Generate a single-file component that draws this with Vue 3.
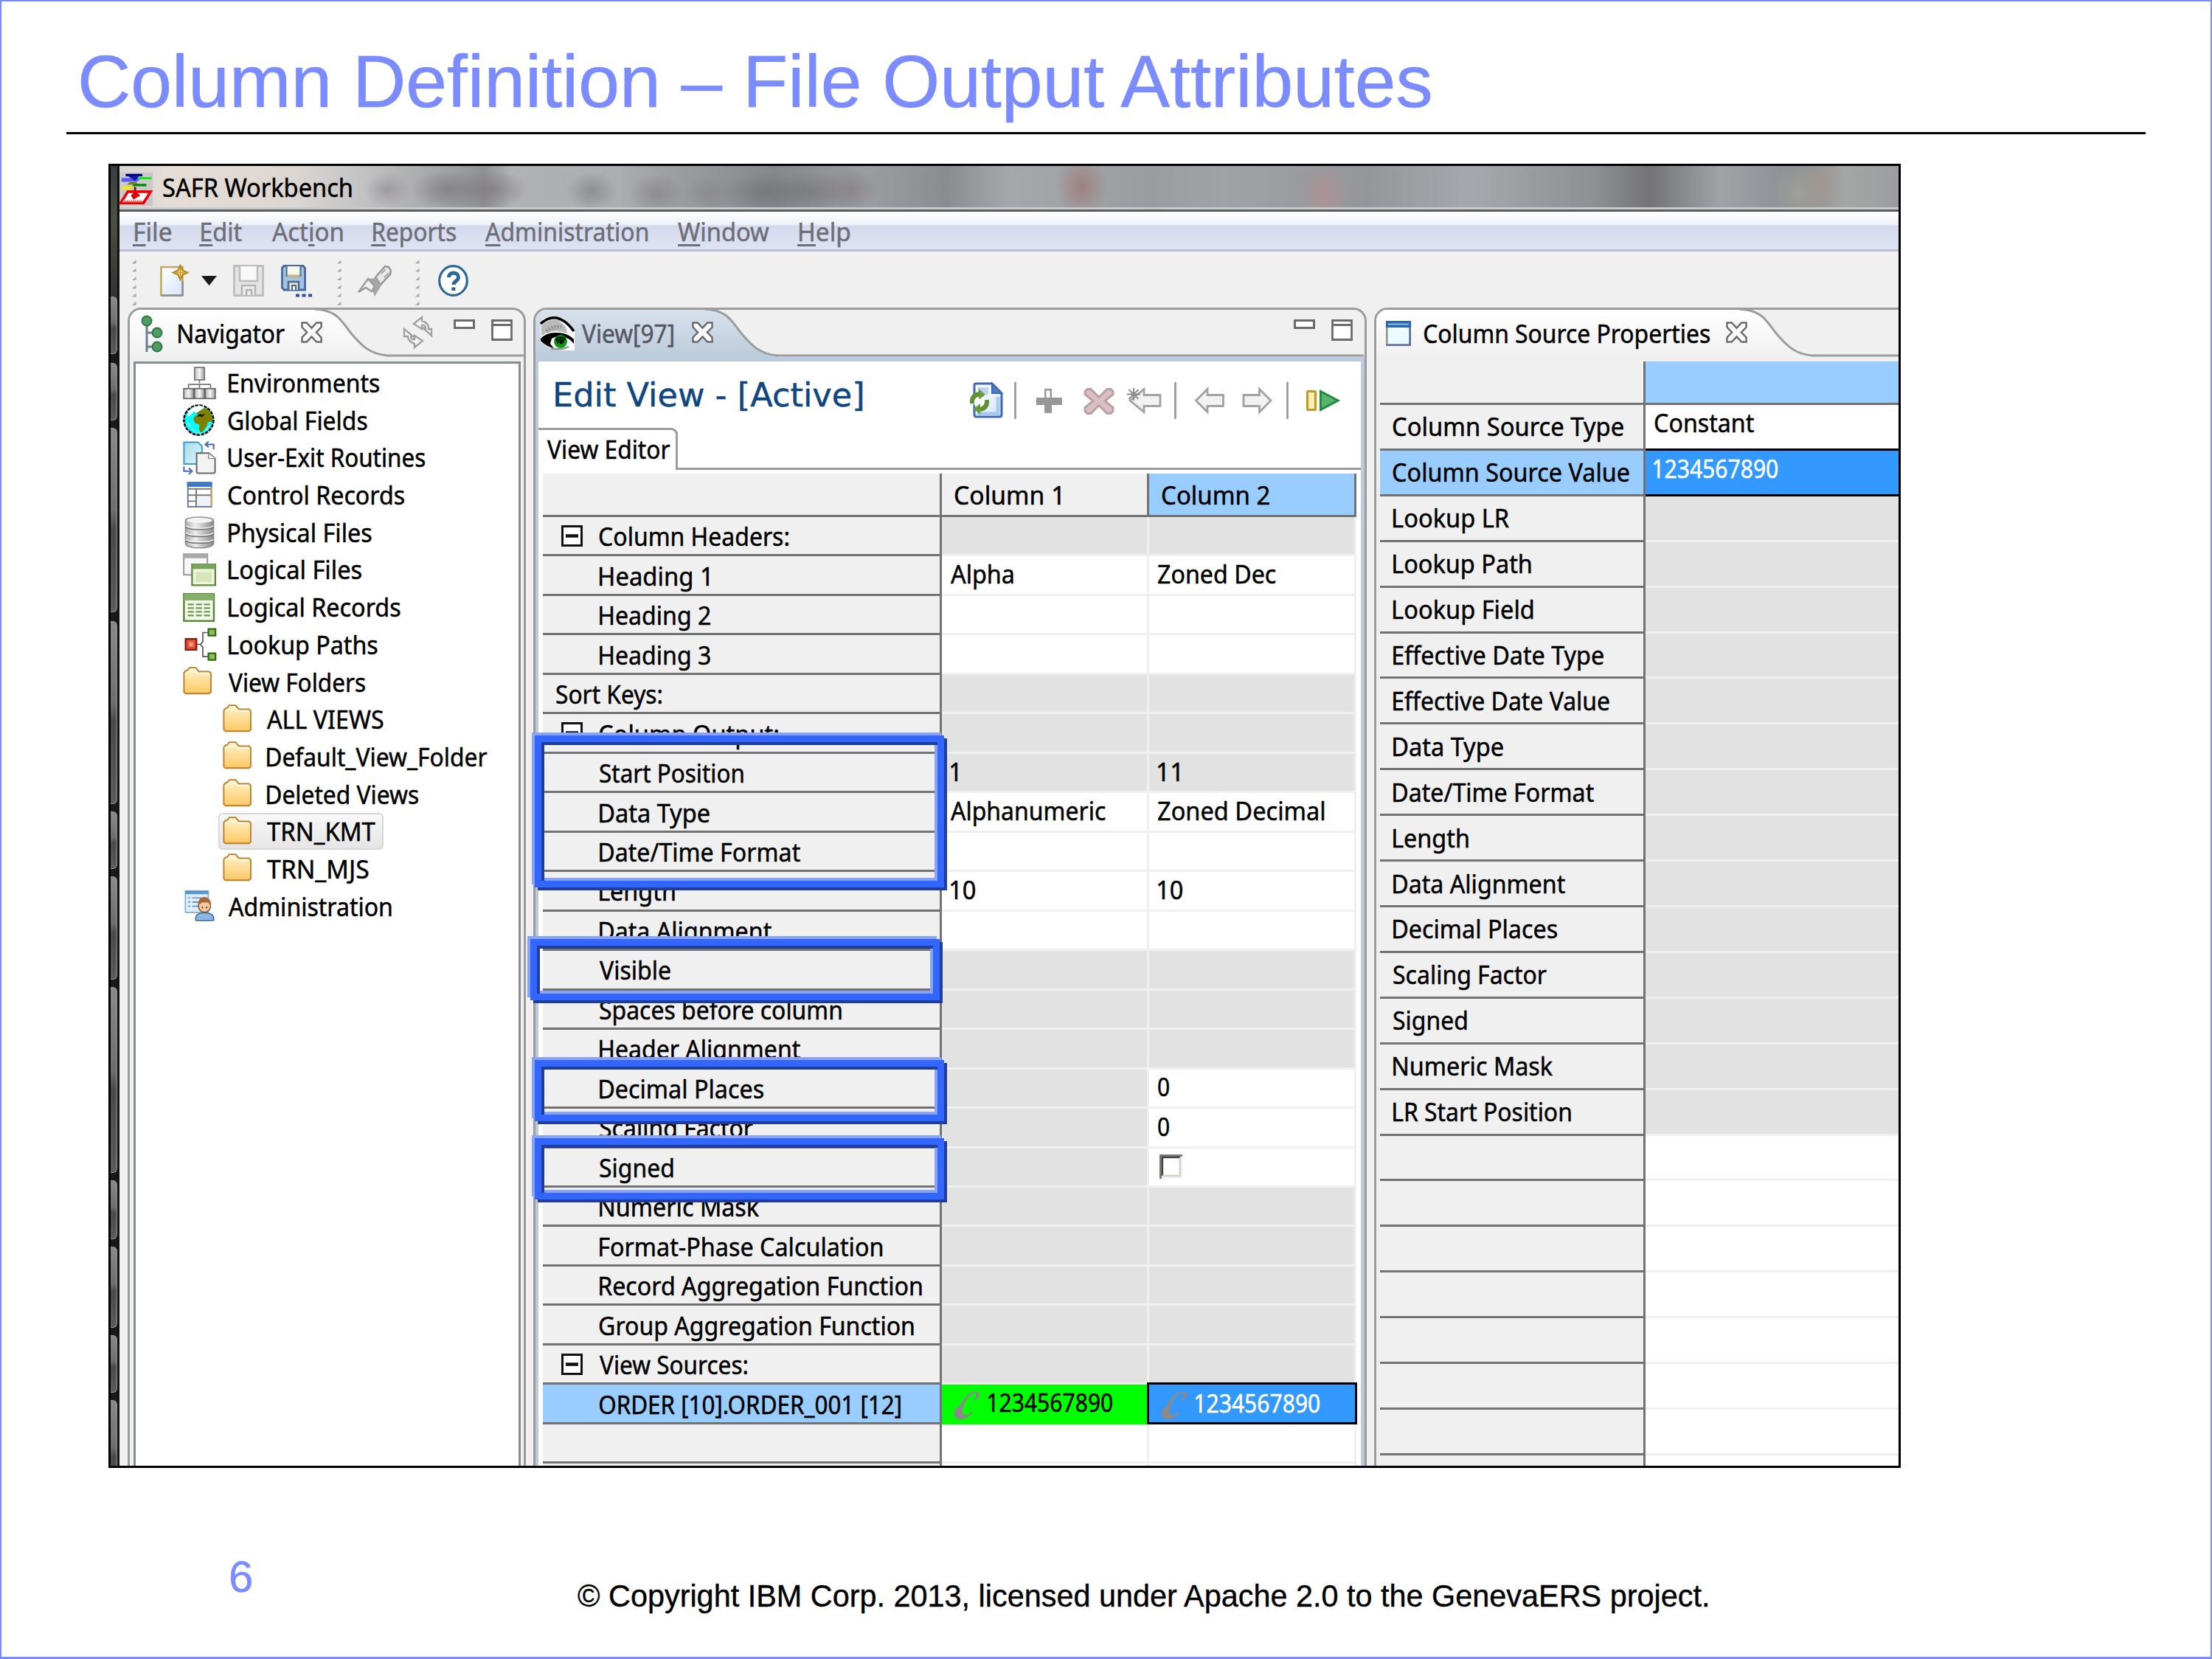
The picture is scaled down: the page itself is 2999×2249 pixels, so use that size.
<script setup>
// Stretches a label horizontally so that its inked width equals the given number of pixels.
const pen = document.createElement('canvas').getContext('2d')
function fit(el, { value }) {
  const cs = getComputedStyle(el)
  pen.font = `${cs.fontWeight} ${cs.fontSize} ${cs.fontFamily}`
  const m = pen.measureText(el.textContent)
  const ink = m.actualBoundingBoxRight + m.actualBoundingBoxLeft
  const s = value / ink
  el.style.width = value + 'px'
  el.style.transform = `translateX(${m.actualBoundingBoxLeft * s}px) scaleX(${s})`
}
const vFit = { mounted: fit }

const strip = [
  [177, 78], [12, 78], [10, 250], [12, 248], [10, 78], [10, 140],
  [10, 252], [10, 80], [10, 110], [10, 78], [10, 140],
]

const menu = [
  ['', 'F', 'ile', 49.5, 183], ['', 'E', 'dit', 55, 273], ['Act', 'i', 'on', 96, 368.5],
  ['', 'R', 'eports', 112, 506], ['', 'A', 'dministration', 220.5, 657.5],
  ['', 'W', 'indow', 124, 919], ['', 'H', 'elp', 69, 1083.5],
].map((m, i, all) => ({
  pre: m[0], key: m[1], post: m[2], w: m[3],
  gap: m[4] - (i ? all[i - 1][4] + all[i - 1][3] : 162),
}))

const icons = {
  env: '<path d="M8 5v3M2.7 11V8.6h10.6V11M8 8.6V11" fill="none" stroke="#777" stroke-width=".6"/><rect x="5.6" y=".4" width="4.8" height="6" fill="url(#steel)" stroke="#777" stroke-width=".6"/><rect x=".4" y="10.6" width="4.8" height="4.8" fill="url(#steel)" stroke="#666" stroke-width=".6"/><rect x="5.6" y="10.6" width="4.8" height="4.8" fill="url(#steel)" stroke="#666" stroke-width=".6"/><rect x="10.8" y="10.6" width="4.8" height="4.8" fill="url(#steel)" stroke="#666" stroke-width=".6"/>',
  globe: '<circle cx="7.6" cy="8" r="7.1" fill="#0ff" stroke="#000" stroke-width=".9" stroke-dasharray="1.6 .5"/><path d="M4.5 1.8 8 1l2.5.6-2 1.8-2 1.2L4.5 3z" fill="#fff"/><path d="M6.4 4.6 9 3l2-1 2 1.6 1.3 2.6-.2 2.4-2 .4-.8 2.2-1.6 2-1.2 1.2-.7-2.2.2-2-2.2-.8-.8-2 1-1.6 1.4.2z" fill="#808000"/><path d="m2.6 3.6 2-1.4.8 1.6-2 2-1.2.6z" fill="#fff"/><path d="m7 6.2 1.4-.8.6.8 1.2-1" fill="none" stroke="#000" stroke-width=".6"/><path d="m2 9 4 5 3 .4M11 13l2.6-3" fill="none" stroke="#bff" stroke-width=".9" stroke-dasharray=".5 .5"/>',
  exit: '<path d="M.5.5h6.7l2 2V11H.5z" fill="url(#aqua)" stroke="#3b9dc4" stroke-width=".7"/><path d="M6.6 5.8h6l2.9 2.6v6.2q0 .9-.9.9H7.4q-.8 0-.8-.9z" fill="#f3f3f3" stroke="#666" stroke-width=".7"/><path d="M12.4 5.8v2.6h3" fill="#fff" stroke="#888" stroke-width=".5"/><path d="M14.8 4V1.6H11M12.4.2 10.8 1.6l1.6 1.3M.5 12.2v2.3h3.6M2.8 13l1.6 1.5L2.8 16" fill="none" stroke="#4a6db5" stroke-width=".75"/>',
  control: '<rect x="2.4" y="1.9" width="11.3" height="11.6" fill="#fff" stroke="#6b7d9c" stroke-width=".7"/><rect x="2" y="1.5" width="12.1" height="2.4" fill="#3f7ac8"/><path d="M2.4 4.9h11.3M2.4 7.9h11.3M6.4 5v8.4M2.4 10.8h4" fill="none" stroke="#777" stroke-width=".7"/><path d="M13.8 4v9" stroke="#c9a84e" stroke-width=".7"/><rect x="6.9" y="8.5" width="6.3" height="4.6" fill="#eef3fb"/>',
  physical: '<path d="M1.2 2.4C1.2.1 14.8.1 14.8 2.4v11c0 2.900-13.600 2.900-13.600 0z" fill="url(#steel2)" stroke="#8a8a8a" stroke-width=".5"/><ellipse cx="8" cy="2.300" rx="6.200" ry="1.200" fill="#f4f4f4"/><path d="M1.300 5.400c1 1.700 12.400 1.700 13.400 0M1.300 8.800c1 1.700 12.400 1.700 13.400 0M1.300 12c1 1.700 12.400 1.700 13.400 0" fill="none" stroke="#757575" stroke-width=".6"/><path d="M1.500 4.800c1 1.700 12 1.700 13 0M1.500 8.200c1 1.700 12 1.700 13 0M1.500 11.400c1 1.700 12 1.700 13 0" fill="none" stroke="#f2f2f2" stroke-width=".5"/>',
  lfile: '<rect x=".4" y=".4" width="11.400" height="10" fill="#f7f7f7" stroke="#999" stroke-width=".7"/><rect x=".4" y=".4" width="11.400" height="2" fill="#aaa"/><rect x="4.400" y="5.400" width="11.200" height="10" fill="#eef6dc" stroke="#5c8a3c" stroke-width=".8"/><rect x="4.400" y="5.200" width="11.200" height="2.400" fill="#7ba35c"/><rect x="6.200" y="9" width="7.600" height="4.800" fill="#d5e5b8"/>',
  lrec: '<rect x=".5" y="1.500" width="14.400" height="13" fill="#f4faec" stroke="#5c8a3c" stroke-width=".9"/><rect x=".5" y="1.400" width="14.400" height="3.200" fill="#86ad69"/><path d="M2.300 6.500h10.800M2.300 8.300h10.800M2.300 10.100h10.800M2.300 11.900h10.800" stroke="#6e9b4c" stroke-width=".8" stroke-dasharray="3 .9"/>',
  lookup: '<path d="M6 8h2.600M12 2.300H9.600v4.400L8.400 8l1.200 1.300v4.600H12" fill="none" stroke="#555" stroke-width=".6"/><rect x="1.300" y="5.400" width="5.200" height="5.200" fill="#e0553c" stroke="#8c1208" stroke-width=".8"/><rect x="3" y="7" width="1.900" height="2" fill="#ff9a7d"/><rect x="12.300" y=".6" width="3.400" height="3.200" fill="#8dc054" stroke="#2f6a16" stroke-width=".8"/><rect x="12.300" y="12.300" width="3.400" height="3.200" fill="#8dc054" stroke="#2f6a16" stroke-width=".8"/>',
  folder: '<path d="M.5 12.900V3.500l.9-1 .9-.2.8-1.200h3.100l1.500 1.900h5l.8.900v9l-.9.700H1.300z" fill="url(#gold)" stroke="#b97d2c" stroke-width=".65"/><path d="M1.200 4.300 2.800 3h3.500l1.200 1h5.200" fill="none" stroke="#fffbe8" stroke-width=".6"/>',
  admin: '<rect x="1.200" y=".7" width="11" height="10.300" fill="#dfeefb" stroke="#7ea9d6" stroke-width=".6"/><rect x="1.200" y=".5" width="11" height="1.700" fill="#5c93cf"/><path d="M2.500 4h1M2.500 6h1M2.500 8h1M4.500 4H10M4.500 6h3M4.500 8h3" stroke="#5e8ac4" stroke-width=".6"/><path d="M6.200 14.800q-.5-3.600 4.300-3.700 4.800.1 4.300 3.700l-2 .1h-4.600z" fill="#8db6e0" stroke="#3f6fae" stroke-width=".6"/><circle cx="10.400" cy="8" r="2.900" fill="#f3c9a0" stroke="#8a4a25" stroke-width=".5"/><path d="M7.200 7.600C7 2.200 13.800 2.200 13.600 7.600L12.400 6.200 9.200 6.200z" fill="#a8683c"/><path d="M9.400 8.200v.8M11.400 8.200v.8" stroke="#40220f" stroke-width=".5"/>',
}

const tree = [
  ['env', 'Environments', 204], ['globe', 'Global Fields', 187.5], ['exit', 'User-Exit Routines', 266],
  ['control', 'Control Records', 238], ['physical', 'Physical Files', 193.5], ['lfile', 'Logical Files', 180],
  ['lrec', 'Logical Records', 232.5], ['lookup', 'Lookup Paths', 201.5], ['folder', 'View Folders', 185],
  ['folder', 'ALL VIEWS', 158, 1], ['folder', 'Default_View_Folder', 298.5, 1], ['folder', 'Deleted Views', 205, 1],
  ['folder', 'TRN_KMT', 147, 1, 1], ['folder', 'TRN_MJS', 138, 1], ['admin', 'Administration', 221],
].map(([icon, text, w, child, selected]) => ({ icon, text, w, child, selected }))

// g: unavailable cell, w: editable cell
const rows = [
  ['Column Headers:', 256, 'g', 'g', 'group'],
  ['Heading 1', 148.5, 'w', 'w', '', ['Alpha', 85], ['Zoned Dec', 160]],
  ['Heading 2', 150, 'w', 'w'],
  ['Heading 3', 150, 'w', 'w'],
  ['Sort Keys:', 143, 'g', 'g', 'flat'],
  ['Column Output:', 242, 'g', 'g', 'group'],
  ['Start Position', 195, 'g', 'g', '', ['1', 9.5], ['11', 29]],
  ['Data Type', 149, 'w', 'w', '', ['Alphanumeric', 210], ['Zoned Decimal', 225]],
  ['Date/Time Format', 272, 'w', 'w'],
  ['Length', 102, 'w', 'w', '', ['10', 33], ['10', 33]],
  ['Data Alignment', 233, 'w', 'w'],
  ['Visible', 96, 'g', 'g'],
  ['Spaces before column', 328, 'g', 'g'],
  ['Header Alignment', 272, 'g', 'g'],
  ['Decimal Places', 222, 'g', 'w', '', null, ['0', 15]],
  ['Scaling Factor', 208, 'g', 'w', '', null, ['0', 15]],
  ['Signed', 100, 'g', 'w', '', null, 'check'],
  ['Numeric Mask', 216, 'g', 'g'],
  ['Format-Phase Calculation', 383.5, 'g', 'g'],
  ['Record Aggregation Function', 437, 'g', 'g'],
  ['Group Aggregation Function', 426, 'g', 'g'],
  ['View Sources:', 200, 'g', 'g', 'group'],
  ['ORDER [10].ORDER_001 [12]', 408, 'green', 'active', 'chosen', ['1234567890', 168], ['1234567890', 168]],
  ['', 0, 'w', 'w'],
  ['', 0, 'w', 'w'],
].map(([label, w, a, b, kind, va, vb]) => ({ label, w, kind, cells: [{ bg: a, v: va }, { bg: b, v: vb }] }))

const props = [
  ['Column Source Type', 312, 'w', ['Constant', 134]], ['Column Source Value', 320, 'active', ['1234567890', 168]],
  ['Lookup LR', 157], ['Lookup Path', 187], ['Lookup Field', 190], ['Effective Date Type', 285],
  ['Effective Date Value', 293], ['Data Type', 149], ['Date/Time Format', 272], ['Length', 102],
  ['Data Alignment', 233], ['Decimal Places', 222], ['Scaling Factor', 208], ['Signed', 100],
  ['Numeric Mask', 216], ['LR Start Position', 241],
  ...Array.from({ length: 8 }, () => ['', 0, 'w']),
].map(([label, w, bg = 'g', v]) => ({ label, w, bg, v }))
</script>

<template>
  <main class="slide">
    <svg class="defs" width="0" height="0">
      <defs>
        <linearGradient id="steel"><stop offset="0" stop-color="#bbb" /><stop offset=".5" stop-color="#f4f4f4" /><stop offset="1" stop-color="#999" /></linearGradient>
        <linearGradient id="steel2"><stop offset="0" stop-color="#aaa" /><stop offset=".35" stop-color="#eee" /><stop offset="1" stop-color="#888" /></linearGradient>
        <linearGradient id="aqua" x2="1" y2="1"><stop offset="0" stop-color="#a5dcea" /><stop offset="1" stop-color="#dff5fa" /></linearGradient>
        <linearGradient id="gold" x2="0" y2="1"><stop offset="0" stop-color="#fff3cd" /><stop offset="1" stop-color="#fbc863" /></linearGradient>
        <linearGradient id="tabPlain" x2="0" y2="1"><stop offset="0" stop-color="#fff" /><stop offset="1" stop-color="#f0f0f0" /></linearGradient>
        <linearGradient id="tabBlue" x2="0" y2="1"><stop offset="0" stop-color="#d8e2ec" /><stop offset="1" stop-color="#bccbdb" /></linearGradient>
        <linearGradient id="paper" x2="1" y2="1"><stop offset="0" stop-color="#fff" /><stop offset="1" stop-color="#d5e6fb" /></linearGradient>
      </defs>
    </svg>

    <h1 class="title"><span v-fit="1835" class="t">Column Definition – File Output Attributes</span></h1>
    <div class="rule"></div>

    <section class="shot">
      <div class="strip">
        <i v-for="(b, i) in strip" :key="i" :style="{ marginTop: b[0] + 'px', height: b[1] + 'px' }"></i>
      </div>

      <div class="window">
        <header class="titlebar">
          <svg class="app-icon" viewBox="0 0 16 16" preserveAspectRatio="none">
            <rect width="16" height="16" fill="#c9c9cb" />
            <path d="M3 .6h8v1.200H3z" fill="#00007f" /><path d="M1 2.600h9.500l-2 1.800H1z" fill="#5a5aff" /><path d="M4 1.600h5.500L7.500 4z" fill="#1414a8" />
            <path d="M9 2.200h6.500v1H9z" fill="#0e0" /><path d="M1 6.700h6l-2 1.500H1z" fill="#ee0" /><path d="M5 4.600h3l1 1.200H3.400z" fill="#808000" />
            <path d="M7 5.400h6v1.200H6z" fill="#080" /><path d="M7.500 7v2.500" stroke="#800" />
            <path d="M4 9.200h11L11.600 14.600H.6z" fill="#fff" stroke="#e00" stroke-width="1.300" /><path d="m7.500 9 2.600 2-3.400 2-1.200-2z" fill="#d00" />
            <path d="M1.500 13.800h9.500" stroke="#f66" stroke-width="1.200" stroke-dasharray=".6 .4" />
          </svg>
          <span v-fit="256" class="t">SAFR Workbench</span>
        </header>

        <nav class="menubar">
          <span v-for="m in menu" :key="m.post" class="menu-item" :style="{ marginLeft: m.gap + 'px' }"><span v-fit="m.w" class="t">{{ m.pre }}<u>{{ m.key }}</u>{{ m.post }}</span></span>
        </nav>

        <div class="toolbar">
          <svg class="dots d1" width="8" height="62" viewBox="0 0 8 62"><path v-for="n in 6" :key="n" :d="`M1 ${n * 11.300 - 4}L6.500 ${n * 11.300 - 9}V${n * 11.300 - 4}Z`" fill="#a8a8a8" /></svg>
          <svg class="new" width="38" height="43" viewBox="0 0 38 43">
            <path d="M1.500 3h29v38.500h-29z" fill="url(#paper)" stroke="#c0a869" stroke-width="2.600" /><path d="M30.500 22v19.500h-29" fill="none" stroke="#8c8f9c" stroke-width="2.600" />
            <path d="m27.500 1 3 6.500 6.500 3-6.500 3-3 6.500-3-6.500-6.500-3 6.500-3z" fill="#ffe9a8" stroke="#b98a1c" stroke-width="2.400" /><path d="M27.500 5v11M22 10.500h11" stroke="#c99a2b" stroke-width="1.500" />
          </svg>
          <svg class="drop" width="21" height="13" viewBox="0 0 21 13"><path d="M0 0h21L10.500 13z" fill="#1a1a1a" /></svg>
          <svg class="save" width="42" height="43" viewBox="0 0 42 43">
            <path d="M1.500 1.500h39v40h-39z" fill="#e4e4e4" stroke="#bdbdbd" stroke-width="2.800" /><path d="M9 2v20h24V2" fill="#f8f8f8" stroke="#bdbdbd" stroke-width="2.600" />
            <path d="M12 41V28h18v13" fill="#eee" stroke="#b5b5b5" stroke-width="2.600" /><path d="M18 41v-7h7v7" fill="none" stroke="#b0b0b0" stroke-width="2.600" />
          </svg>
          <svg class="saveas" width="43" height="43" viewBox="0 0 43 43">
            <path d="M1.500 4 4 1.500h26L32.500 4v30H4l-2.500-3z" fill="#a7c1e2" stroke="#44699a" stroke-width="2.800" /><path d="M7.500 2v13h19V2" fill="#f4f7ea" stroke="#5d7ca6" stroke-width="2.400" /><path d="M8.500 15h17" stroke="#d3b75c" stroke-width="2.400" />
            <path d="M10 34V23h14v11" fill="#e8e4c8" stroke="#44699a" stroke-width="2.600" /><path d="M15 34v-6h5v6" fill="#fff" stroke="#44699a" stroke-width="2" />
            <path d="M20 39.500h5v4h-5zM28.500 39.500h5v4h-5zM37 39.500h5v4h-5z" fill="#2c4f9e" />
          </svg>
          <svg class="dots d2" width="8" height="62" viewBox="0 0 8 62"><path v-for="n in 6" :key="n" :d="`M1 ${n * 11.300 - 4}L6.500 ${n * 11.300 - 9}V${n * 11.300 - 4}Z`" fill="#a8a8a8" /></svg>
          <svg class="torch" width="46" height="44" viewBox="0 0 46 44">
            <path d="m24 17 13-15 5 1 3 5-1 5-13 14z" fill="#e9e9e9" stroke="#9a9a9a" stroke-width="2.600" /><path d="m32 12 6-6M36 17l6-6" stroke="#aaa" stroke-width="2" />
            <path d="m14 19 9-1 9 10-9 15-3-8z" fill="#a6a6a6" /><path d="M14 19 1 37l10-6 8 5 4-7z" fill="#efefef" stroke="#9a9a9a" stroke-width="2.400" />
          </svg>
          <svg class="dots d3" width="8" height="62" viewBox="0 0 8 62"><path v-for="n in 6" :key="n" :d="`M1 ${n * 11.300 - 4}L6.500 ${n * 11.300 - 9}V${n * 11.300 - 4}Z`" fill="#a8a8a8" /></svg>
          <svg class="help" width="41" height="43" viewBox="0 0 41 43">
            <ellipse cx="20.500" cy="21.500" rx="18.800" ry="19.800" fill="#fff" stroke="#2d6796" stroke-width="3.200" />
            <path d="M14.500 17c0-8 13-8 13 0 0 5-6.500 5-6.500 10" fill="none" stroke="#2d6796" stroke-width="5" /><path d="M18.200 30.500h5.200v4.500h-5.200z" fill="#2d6796" />
          </svg>
        </div>

        <div class="panels">
          <section class="panel nav">
            <header class="head">
              <svg class="shape" width="540" height="65" viewBox="0 0 540 65"><path d="M0 0H253C283 2 288 18 301 33S325 60 349 62.500V65H0z" fill="url(#tabPlain)" /><path d="M250 -1C283 0 288 18 301 33S325 60 349 62H540" fill="none" stroke="#9c9c9c" stroke-width="3" /></svg>
              <svg class="nav-icon" width="30" height="50" viewBox="0 0 30 50">
                <path d="M8 8v42M8 24h14M8 43h14" fill="none" stroke="#6f7d92" stroke-width="3" />
                <circle cx="8" cy="8" r="6.500" fill="#4f9d64" stroke="#2d7a43" stroke-width="2" /><circle cx="22" cy="24" r="6.500" fill="#4f9d64" stroke="#2d7a43" stroke-width="2" /><circle cx="22" cy="43" r="6.500" fill="#4f9d64" stroke="#2d7a43" stroke-width="2" />
              </svg>
              <span v-fit="144" class="t">Navigator</span>
              <svg class="close" width="29" height="29" viewBox="0 0 10 10"><path d="M.5.5h2.200L5 3 7.300.5h2.200v2.100L7.200 5l2.300 2.400v2.100H7.300L5 7 2.700 9.500H.5V7.400L2.800 5 .5 2.600z" fill="#fff" stroke="#6b6b6b" stroke-width=".85" /></svg>
              <svg class="sync" width="40" height="43" viewBox="0 0 40 43">
                <path d="M14 10 25 1v5q10 3 9 11h4v9L27 16h3q0-5-5-4v5zM26 33 15 42v-5Q6 34 6 27H1V17l12 10h-3q0 5 5 4v-5z" fill="#f4f4f4" stroke="#a0a0a0" stroke-width="2.400" />
              </svg>
              <svg class="min" width="29" height="13" viewBox="0 0 29 13"><path d="M1.500 1.500h26v10h-26z" fill="#fff" stroke="#6b6b6b" stroke-width="3" /></svg>
              <svg class="max" width="29" height="29" viewBox="0 0 29 29"><path d="M1.500 1.500h26v26h-26zM1.500 7.500h26" fill="#fff" stroke="#6b6b6b" stroke-width="2.800" /></svg>
            </header>
            <ul class="tree">
              <li v-for="n in tree" :key="n.text" :class="{ child: n.child }">
                <span class="node" :class="{ selected: n.selected }">
                  <svg width="45" height="45" viewBox="0 0 16 16" v-html="icons[n.icon]"></svg>
                  <span v-fit="n.w" class="t">{{ n.text }}</span>
                </span>
              </li>
            </ul>
          </section>

          <section class="panel view">
            <header class="head">
              <svg class="shape" width="1123" height="65" viewBox="0 0 1123 65"><path d="M0 0H232C262 2 267 18 280 33S304 60 328 62.500V65H0z" fill="url(#tabBlue)" /><path d="M229 -1C262 0 267 18 280 33S304 60 328 62H1123" fill="none" stroke="#9c9c9c" stroke-width="3" /></svg>
              <svg class="eye" width="46" height="46" viewBox="0 0 46 46">
                <path d="M2 4Q10 0 20 0q12 0 26 20v26H30L10 42 0 34V16z" fill="#fff" /><path d="M1 13Q10 2 24 5l10 9 2 9Q18 16 1 26z" fill="#b9b9b9" /><path d="M8 20q8-7 20-6" fill="none" stroke="#8c8c8c" stroke-width="5" stroke-dasharray="2 2" />
                <path d="M0 10Q10 0 22 2q12 3 23 18" fill="none" stroke="#000" stroke-width="3.500" /><path d="M0 30q8-9 22-8 14 0 23 9v6q-6-8-14-9-10-2-16 2l-2 7 5 6q-10-2-18-10z" fill="#000" />
                <circle cx="27" cy="34" r="9" fill="#0a9a14" /><path d="M20 31q0-4 7-4t7 4l-3 5-5-3-3 5z" fill="#031" /><circle cx="28" cy="35" r="2.500" fill="#000" /><path d="M14 44h16l8-3" fill="none" stroke="#999" stroke-width="2.500" />
              </svg>
              <span v-fit="124" class="t faded">View[97]</span>
              <svg class="close" width="29" height="29" viewBox="0 0 10 10"><path d="M.5.5h2.200L5 3 7.300.5h2.200v2.100L7.200 5l2.300 2.400v2.100H7.300L5 7 2.700 9.500H.5V7.400L2.800 5 .5 2.600z" fill="#fff" stroke="#6b6b6b" stroke-width=".85" /></svg>
              <svg class="min" width="29" height="13" viewBox="0 0 29 13"><path d="M1.500 1.500h26v10h-26z" fill="#fff" stroke="#6b6b6b" stroke-width="3" /></svg>
              <svg class="max" width="29" height="29" viewBox="0 0 29 29"><path d="M1.500 1.500h26v26h-26zM1.500 7.500h26" fill="#fff" stroke="#6b6b6b" stroke-width="2.800" /></svg>
            </header>
            <div class="body">
              <div class="form-head">
                <h2><span v-fit="416" class="t">Edit View - [Active]</span></h2>
                <svg class="actions" width="506" height="50" viewBox="0 0 506 50">
                  <path d="M8 4q0-2 2-2h22l13 13v29q0 3-3 3H11q-3 0-3-3z" fill="url(#paper)" stroke="#3f68b4" stroke-width="3" /><path d="M32 2v13h13z" fill="#4c7cc4" stroke="#3f68b4" stroke-width="2" /><path d="M12 43h28V20" fill="none" stroke="#a9c8f0" stroke-width="5" /><path d="M13 7h14v10H13z" fill="#bcd5f5" />
                  <ellipse cx="15" cy="27" rx="8" ry="8" fill="#fff" /><path d="M5 29q-1-12 11-13" fill="none" stroke="#5f9130" stroke-width="6" /><path d="m14 9 9 8-9 7z" fill="#6c9c3a" /><path d="M25 24q1 12-10 13" fill="none" stroke="#5f9130" stroke-width="6" /><path d="m16 44-9-8 9-7z" fill="#6c9c3a" /><path d="m11 30 3-6 3 5 3-5" fill="none" stroke="#fff" stroke-width="2.500" />
                  <path d="M63.500 0v50M280.500 0v50M432.500 0v50" stroke="#9a9a9a" stroke-width="2.800" />
                  <path d="M103 9h10v12h14v10h-14v11h-10V31H92V21h11z" fill="#979797" /><path d="M105.500 11.500h5V21h-5z" fill="#fff" />
                  <path d="M161 9.500h5l11 11 11-11h5l3 3v4l-11 9 11 9v5l-3 3h-5l-11-11-11 11h-5l-3-3v-5l11-9-11-9v-4z" fill="#d8c0c4" stroke="#b9a0a5" stroke-width="3" />
                  <path d="M219 25 238 9.500v8h22v15h-22v8z" fill="#f2f2f2" stroke="#a2a2a2" stroke-width="2.800" /><path d="M224 8v17M217.500 10l13 13M230.500 10l-13 13M215 16.500h18" stroke="#8e8e8e" stroke-width="2" />
                  <path d="M308.500 25 324 9.500v8h21.500v15H324v8z" fill="#f2f2f2" stroke="#a2a2a2" stroke-width="2.800" />
                  <path d="M410 25 394.500 9.500v8H373v15h21.500v8z" fill="#f2f2f2" stroke="#a2a2a2" stroke-width="2.800" />
                  <rect x="459.500" y="12.500" width="11" height="25" rx="1" fill="#fff0b8" stroke="#c59a26" stroke-width="3.200" /><path d="M477.500 12.500 501 25l-23.500 12.500z" fill="#55b56c" stroke="#23893f" stroke-width="3" />
                </svg>
              </div>
              <div class="tabs"><div class="tab"><span v-fit="166.500" class="t">View Editor</span></div></div>
              <div class="grid">
                <div class="row top">
                  <div class="label"></div>
                  <div class="col"><span v-fit="143" class="t">Column 1</span></div>
                  <div class="col on"><span v-fit="145" class="t">Column 2</span></div>
                </div>
                <div v-for="(r, i) in rows" :key="i" class="row">
                  <div class="label" :class="r.kind">
                    <svg v-if="r.kind === 'group'" class="minus" width="29" height="29" viewBox="0 0 29 29"><path d="M1.500 1.500h26v26h-26z" fill="#fff" stroke="#111" stroke-width="3" /><path d="M6 14.500h17" stroke="#111" stroke-width="4.500" /></svg>
                    <span v-if="r.label" v-fit="r.w" class="t">{{ r.label }}</span>
                  </div>
                  <div v-for="(c, j) in r.cells" :key="j" class="cell" :class="c.bg">
                    <svg v-if="c.v === 'check'" class="check" width="31" height="33" viewBox="0 0 31 33"><path d="M0 0h31v33H0z" fill="#f4f4f4" /><path d="M1.500 33V1.500H31" fill="none" stroke="#7a7a7a" stroke-width="3" /><path d="M4 29V4h24" fill="none" stroke="#444" stroke-width="2.500" /><path d="M5.500 5.500h20v22h-20z" fill="#fff" /><path d="M28 4v25H4" fill="none" stroke="#d5d2c8" stroke-width="2.500" /></svg>
                    <template v-else-if="c.v">
                      <svg v-if="r.kind === 'chosen'" class="script-c" width="37" height="38" viewBox="0 0 37 38"><path d="M35 5C36 0 28-1 22 3 14 8 10 16 8 20 3 22 0 27 1 32c1 6 9 8 16 4 3-1 6-4 8-7l-2-1c-3 4-6 5-9 4-4-2-2-10 1-16 3-7 9-13 14-13 3 0 2 5-2 9l2 1c3-2 5-5 6-8z" fill="#8a8a8a" /></svg>
                      <span v-fit="c.v[1]" class="t">{{ c.v[0] }}</span>
                    </template>
                  </div>
                </div>
              </div>
            </div>
          </section>

          <section class="panel source">
            <header class="head">
              <svg class="shape" width="711" height="65" viewBox="0 0 711 65"><path d="M0 0H495C525 2 530 18 543 33S567 60 591 62.500V65H0z" fill="url(#tabPlain)" /><path d="M492 -1C525 0 530 18 543 33S567 60 591 62H711" fill="none" stroke="#9c9c9c" stroke-width="3" /></svg>
              <svg class="win-icon" width="34" height="34" viewBox="0 0 34 34"><path d="M1.300 1.300h31.400v31.400H1.300z" fill="#eafaff" stroke="#8b9a8a" stroke-width="2.600" /><path d="M0 0h34v9H0z" fill="#2b66b1" /><path d="M3 4.500h28" stroke="#8cbbe8" stroke-width="2" /><path d="M0 32.700h34M32.700 9v25" stroke="#5f6f9c" stroke-width="2.600" /></svg>
              <span v-fit="387" class="t">Column Source Properties</span>
              <svg class="close" width="29" height="29" viewBox="0 0 10 10"><path d="M.5.5h2.200L5 3 7.300.5h2.200v2.100L7.200 5l2.300 2.400v2.100H7.300L5 7 2.700 9.500H.5V7.400L2.800 5 .5 2.600z" fill="#fff" stroke="#6b6b6b" stroke-width=".85" /></svg>
            </header>
            <div class="props">
              <div class="prow top"><div class="plabel"></div><div class="pval on"></div></div>
              <div v-for="(p, i) in props" :key="i" class="prow">
                <div class="plabel" :class="{ on: p.bg === 'active' }"><span v-if="p.label" v-fit="p.w" class="t">{{ p.label }}</span></div>
                <div class="pval" :class="p.bg"><span v-if="p.v" v-fit="p.v[1]" class="t">{{ p.v[0] }}</span></div>
              </div>
            </div>
          </section>
        </div>
      </div>

      <div v-for="n in 4" :key="n" class="mark" :class="'m' + n"><i class="light"></i><i class="dark"></i><i class="main"></i></div>
    </section>

    <footer class="foot">
      <span v-fit="28.500" class="t page">6</span>
      <span v-fit="1534" class="t copy">© Copyright IBM Corp. 2013, licensed under Apache 2.0 to the GenevaERS project.</span>
    </footer>
  </main>
</template>

<style>
body { margin: 0; background: #fff; }
</style>

<style scoped>
* { box-sizing: border-box; }
svg { display: block; flex: none; overflow: visible; }
.defs { position: absolute; }
.slide {
  width: 2999px; height: 2249px; overflow: hidden; background: #fff;
  border: 2px solid #7a8cfb; border-bottom-width: 3px;
  font-family: "Liberation Sans", Arial, sans-serif; color: #000;
}
.t { display: inline-block; flex: none; white-space: pre; transform-origin: 0 50%; }
.title { margin: 58px 0 0 108px; font-size: 100px; line-height: 100px; font-weight: 400; color: #7a8cff; height: 100px; -webkit-text-stroke: .6px; }
.rule { margin: 19px 0 0 88px; width: 2819px; height: 3px; background: #000; }

.shot {
  position: relative; display: flex; margin: 40px 0 0 145px; width: 2430px; height: 1768px; overflow: hidden;
  border: 3px solid #000; font: 34px/50px "Noto Sans", "Open Sans", sans-serif; -webkit-text-stroke: .5px;
}
.strip { flex: none; width: 12px; border-right: 3px solid #111; background: linear-gradient(#3a3c40, #4a5240 4%, #333 10%, #1a1a1a 12%); }
.strip i { display: block; width: 9px; border: 1px solid #999; border-left: 0; border-radius: 0 6px 6px 0; background: linear-gradient(#8a8a8a, #6e6e6e 45%, #4a4a4a 55%, #5c5c5c); }
.window { flex: 1; display: flex; flex-direction: column; min-width: 0; background: #f0f0f0; }

.titlebar {
  flex: none; display: flex; align-items: center; height: 62px; padding-bottom: 1px; border-bottom: 3px solid #5a5c5e; box-shadow: inset 0 -3px #c9cacb;
  background:
    radial-gradient(ellipse 32px 24px at 363px 32px, #8e889099, transparent),
    radial-gradient(ellipse 50px 26px at 445px 32px, #77747aaa, transparent),
    radial-gradient(ellipse 50px 26px at 505px 32px, #7d757faa, transparent),
    radial-gradient(ellipse 34px 26px at 640px 34px, #7f7f84aa, transparent),
    radial-gradient(ellipse 36px 26px at 728px 37px, #85808aaa, transparent),
    radial-gradient(ellipse 34px 22px at 800px 36px, #85838a99, transparent),
    radial-gradient(ellipse 60px 26px at 875px 35px, #737376bb, transparent),
    radial-gradient(ellipse 50px 26px at 935px 34px, #77777abb, transparent),
    radial-gradient(ellipse 40px 28px at 990px 32px, #857a7faa, transparent),
    radial-gradient(ellipse 34px 44px at 1304px 28px, #a0706eaa, transparent),
    radial-gradient(ellipse 36px 42px at 1632px 38px, #b99092aa, transparent),
    radial-gradient(ellipse 36px 44px at 2275px 38px, #a8a89caa, transparent),
    radial-gradient(ellipse 30px 44px at 2305px 22px, #a8958caa, transparent),
    linear-gradient(90deg, #d8d4d0, #e6ddd6 3%, #dcd6d2 10%, #c4c4c5 13.500%, #a4a5a6 18%, #8f9092 20.500%, #b0b2b4 22%, #abadb0 28%, #9c9ea0 31%, #85878b 37%, #9a9da1 42%, #8b8c8f 46.500%, #a5a8ab 50%, #9a9ca0 58%, #a0a3a6 62%, #94969a 70%, #a5a8ac 76%, #8d8f92 83%, #747476 86%, #a0a2a6 90%, #8c8f94 94%, #909296 95%, #a5a7a6 97%, #9b9da0);
}
.app-icon { width: 45px; height: 45px; margin: 4px 14px 0 0; }
.menubar {
  flex: none; display: flex; align-items: center; height: 54px; border-bottom: 3px solid #b9bfd2; color: #6e6e78;
  background: linear-gradient(#fff, #eef1f9 34%, #d4daed 38%, #dfe4f4);
}
.menu-item { flex: none; height: 50px; position: relative; top: 1px; }
.menu-item u { text-decoration: underline; text-decoration-thickness: 3px; text-underline-offset: 4px; text-decoration-skip-ink: none; }
.toolbar { flex: none; display: flex; align-items: center; height: 76px; padding-top: 3px; }
.d1 { margin-left: 16px; } .new { margin-left: 31px; } .drop { margin-left: 18px; } .save { margin-left: 22px; } .saveas { margin-left: 23px; }
.d2 { margin-left: 32px; } .torch { margin-left: 21px; } .d3 { margin-left: 31px; } .help { margin-left: 24px; }

.panels { flex: 1; display: flex; gap: 10px; padding-left: 11px; min-height: 0; }
.panel { flex: none; display: flex; flex-direction: column; border: 3px solid #9c9c9c; border-bottom: 0; border-radius: 18px 18px 0 0; background: #f0f0f0; overflow: hidden; }
.nav { width: 540px; }
.view { width: 1130px; background: #bccbdf; }
.view .head { background: #f0f0f0; }
.source { flex: 1; border-right: 0; border-top-right-radius: 0; }
.head { position: relative; flex: none; display: flex; align-items: center; height: 64px; }
.head > * { position: relative; }
.head .shape { position: absolute; left: 0; top: 0; overflow: hidden; }
.nav-icon { margin: 0 21px 0 15px; }
.close { margin: -3px 0 0 22px; }
.sync { margin: -4px 0 0 110px; }
.min { margin: 0 0 26px 28px; }
.max { margin: 0 0 10px 22px; }
.eye { margin: 0 10px 0 7px; }
.faded { color: #565662; }
.view .min { margin-left: 787px; }
.view .close { margin-left: 25px; }
.win-icon { margin: 0 18px 0 13px; }

.tree { flex: 1; margin: 6px 4px 0 5px; padding: 1px 0 0; list-style: none; border: 3px solid #868b94; border-bottom: 0; background: #fff; }
.tree li { display: flex; height: 50.690px; padding-left: 64px; }
.tree li.child { padding-left: 112px; }
.node { display: flex; align-items: center; gap: 17px; height: 50px; padding: 0 11px 0 0; }
.child .node { padding-left: 6px; gap: 15px; border-radius: 6px; }
.node.selected { background: linear-gradient(#f9f9f9, #e4e4e4); box-shadow: inset 0 0 0 2px #d8d8d8; }

.body { flex: 1; display: flex; flex-direction: column; margin: 6px 5px 0 4px; background: #fff; min-height: 0; }
.form-head { flex: none; display: flex; height: 90px; padding: 21px 0 0 23px; }
h2 { margin: 0; width: 559px; font: 400 45px/50px "DejaVu Sans", Verdana, sans-serif; color: #0f467f; height: 50px; }
.actions { margin: 7px 0 0 1px; }
.tabs { flex: none; height: 57px; background: linear-gradient(#9c9c9c, #9c9c9c) 0 54px / 100% 3px no-repeat; }
.tab { width: 189px; height: 57px; padding: 1px 0 0 12px; border: 3px solid #9c9c9c; border-left: 0; border-bottom: 0; border-radius: 0 9px 0 0; background: #fff; }
.grid { flex: 1; margin: 5px 0 0 6px; min-height: 0; }
.row { display: flex; height: 53.480px; }
.row.top { height: 59px; }
.label, .col { display: flex; align-items: center; padding-top: 2px; background: #f0f0f0; border: solid #727272; border-width: 0 3px 3px 0; }
.label { width: 541px; padding-left: 77px; }
.group { padding-left: 25px; }
.group .t { margin-left: 23px; }
.minus { margin-top: -2px; }
.flat { padding-left: 18px; }
.chosen, .on, .col.on { background: #99ccff; }
.col { width: 281px; padding-left: 18px; }
.cell { display: flex; align-items: center; width: 281px; padding: 0 0 3px 12px; border: solid #f0f0f0; border-width: 0 3px 3px 0; background: #fff; }
.cell.g { background: #e2e2e2; }
.cell.green { background: #0f0; border-color: #0f0; padding-left: 16px; }
.cell.active { width: 285px; height: 57px; margin: -3px 0 0 -3px; padding: 0 0 2px 16px; border: 3px solid #000; background: #3399ff; color: #fff; z-index: 1; }
.script-c { margin: 7px 10px 0 0; }
.check { margin: 3px 0 0 2px; }

.props { flex: 1; margin: 6px 0 0 5px; min-height: 0; }
.prow { display: flex; height: 61.910px; }
.prow.top { height: 59px; }
.plabel { display: flex; align-items: center; width: 360px; padding: 0 0 0 18px; border: solid #727272; border-width: 0 3px 3px 0; background: #f0f0f0; }
.plabel.on, .pval.on { background: #99ccff; }
.pval { display: flex; align-items: center; flex: 1; padding: 0 0 11px 13px; border-bottom: 3px solid #f0f0f0; background: #fff; }
.top .pval { border-color: #727272; }
.pval.g { background: #e2e2e2; }
.pval.active { height: 65px; margin-top: -3px; padding: 0 0 11px 11px; border: solid #000; border-width: 3px 0; background: #3399ff; color: #fff; z-index: 1; }

.mark { position: absolute; z-index: 2; left: 575px; width: 555px; height: 83px; }
.mark i { position: absolute; inset: 0; border: 9px solid #3366ff; }
.mark .light { inset: -4px 4px 4px -4px; border-color: #87a3ff; }
.mark .dark { inset: 4px -4px -4px 4px; border-color: #1f3d9a; }
.m1 { top: 772px; height: 206px; }
.m2 { left: 569px; top: 1048px; }
.m3 { top: 1212px; }
.m4 { top: 1318px; }

.foot { display: flex; align-items: flex-start; padding: 118px 0 0 311px; -webkit-text-stroke: .4px; }
.page { font-size: 59px; line-height: 60px; color: #7a8cff; }
.copy { margin: 34px 0 0 441px; font-size: 42.500px; line-height: 44px; }
</style>
